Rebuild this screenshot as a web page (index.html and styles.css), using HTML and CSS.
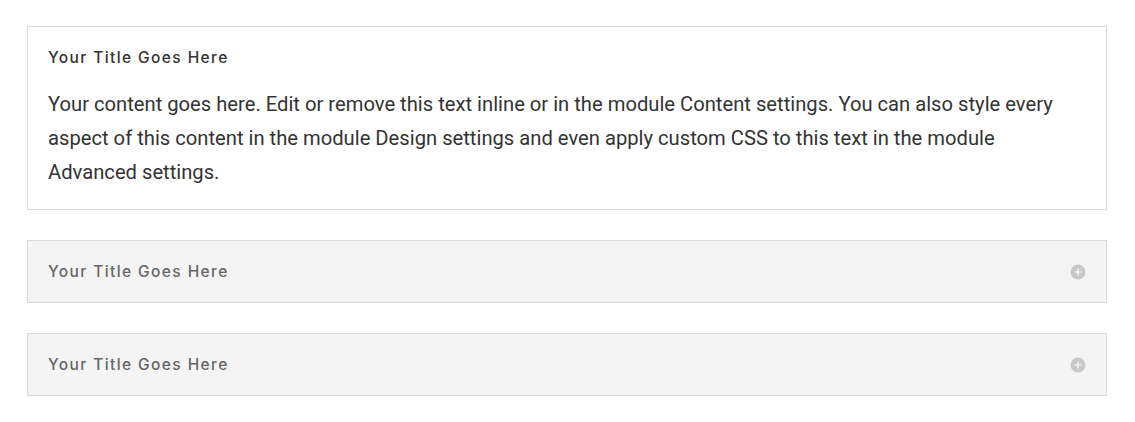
FILE: index.html
```html
<!DOCTYPE html>
<html>
<head>
<meta charset="utf-8">
<link rel="stylesheet" href="styles.css">
</head>
<body>
<div class="page">
  <div class="toggle open">
    <h5 class="toggle-title">Your Title Goes Here</h5>
    <div class="toggle-content">Your content goes here. Edit or remove this text inline or in the module Content settings. You can also style every aspect of this content in the module Design settings and even apply custom CSS to this text in the module Advanced settings.</div>
  </div>
  <div class="toggle closed">
    <h5 class="toggle-title">Your Title Goes Here</h5>
    <svg class="toggle-icon" viewBox="0 0 16 16" width="16" height="16"><circle cx="8" cy="8" r="7.5" fill="#c8c8c8"/><path d="M4.5 8h7M8 4.5v7" stroke="#fff" stroke-width="1.2"/></svg>
  </div>
  <div class="toggle closed">
    <h5 class="toggle-title">Your Title Goes Here</h5>
    <svg class="toggle-icon" viewBox="0 0 16 16" width="16" height="16"><circle cx="8" cy="8" r="7.5" fill="#c8c8c8"/><path d="M4.5 8h7M8 4.5v7" stroke="#fff" stroke-width="1.2"/></svg>
  </div>
</div>
</body>
</html>
```
FILE: styles.css
```css
html, body { margin: 0; padding: 0; background: #fff; }
.page {
  padding: 26px 28px 27px 27px;
  display: flex;
  flex-direction: column;
  gap: 30px;
}
.toggle {
  border: 1px solid #d9d9d9;
  padding: 20px;
  position: relative;
}
.toggle.closed {
  background: #f4f4f4;
  display: flex;
  align-items: center;
  justify-content: space-between;
}
.toggle-title {
  margin: 0;
  font-family: Inter, "Open Sans", sans-serif;
  font-size: 15.5px;
  font-weight: 500;
  letter-spacing: 1.4px;
  line-height: 21px;
  color: #333;
}
.toggle.closed .toggle-title { color: #666; }
.toggle-content {
  margin-top: 19px;
  font-family: Roboto, "Liberation Sans", sans-serif;
  font-size: 20.2px;
  line-height: 34px;
  color: #333;
}
.toggle-icon { display: block; margin-right: 0px; }
```
